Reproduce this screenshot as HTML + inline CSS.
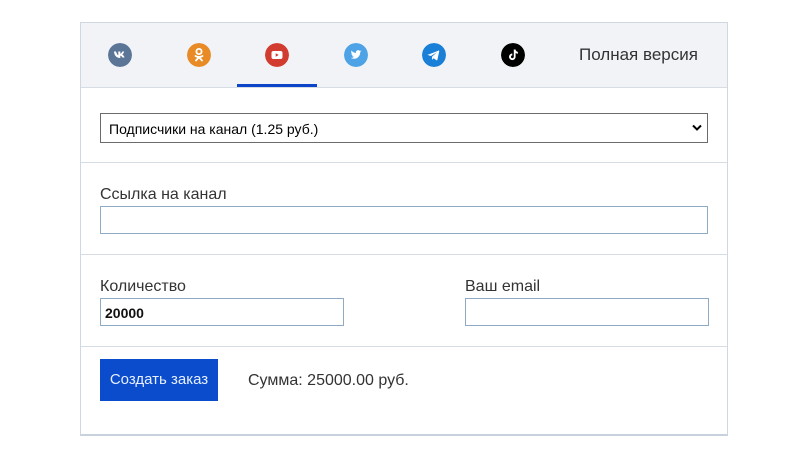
<!DOCTYPE html>
<html><head><meta charset="utf-8"><style>
*{box-sizing:border-box;margin:0;padding:0}
body{width:800px;height:456px;background:#fff;font-family:"Liberation Sans","DejaVu Sans",sans-serif;position:relative;overflow:hidden;color:#222}
.box{position:absolute;left:80px;top:22px;width:648px;height:414px;border:1px solid #cfd8e0;border-bottom:2px solid #c8d2dc}
.hdr{position:absolute;left:0;top:0;width:646px;height:65px;background:#f1f3f6;border-bottom:1px solid #d6dde4}
.ic{position:absolute;top:20px;width:24px;height:24px;border-radius:50%}
.ul{position:absolute;left:156px;top:61px;width:80px;height:3px;background:#0c45c7}
.full{position:absolute;left:498px;top:22px;font-size:17px;color:#333}
.hr{position:absolute;left:0;width:646px;height:1px;background:#d6dde4}
.sel{position:absolute;left:19px;top:90px;width:608px;height:30px;border:1px solid #6b6b6b;font-size:14px;padding:7px 8px;color:#000}
.lbl{position:absolute;font-size:16px;color:#333}
.inp{position:absolute;height:28px;border:1px solid #8eaac4;font-size:14px;font-weight:bold;padding:6px 4px;color:#111}
.btn{position:absolute;left:19px;top:336px;width:118px;height:42px;background:#0a4ccc;color:#e8f0ff;font-size:15px;text-align:center;line-height:42px}
</style></head><body>
<div class="box">
<div class="hdr">
<svg class="ic" style="left:27px" viewBox="0 0 24 24"><circle cx="12" cy="12" r="12" fill="#5b7597"/><path d="M6 8.5h2c.6 2 1.5 3.5 2.3 3.8V8.5h2v2.3c.8-.1 1.6-1.2 2-2.3h1.9c-.3 1.4-1.3 2.6-2 3 .8.4 1.9 1.4 2.3 3h-2.1c-.4-1-1.2-1.8-2.1-1.9V15h-.3C8.6 15 6.3 12.6 6 8.5z" fill="#fff"/></svg>
<svg class="ic" style="left:106px" viewBox="0 0 24 24"><circle cx="12" cy="12" r="12" fill="#e88b26"/><circle cx="12" cy="8.5" r="2.6" fill="none" stroke="#fff" stroke-width="1.8"/><path d="M8.5 13c2 1.3 5 1.3 7 0M12 14.2l-3 3.3M12 14.2l3 3.3" stroke="#fff" stroke-width="1.8" fill="none" stroke-linecap="round"/></svg>
<svg class="ic" style="left:184px" viewBox="0 0 24 24"><circle cx="12" cy="12" r="12" fill="#d23b2f"/><rect x="6.5" y="8" width="11" height="8" rx="2" fill="#fff"/><path d="M10.7 10.2v3.6l3-1.8z" fill="#d23b2f"/></svg>
<svg class="ic" style="left:263px" viewBox="0 0 24 24"><circle cx="12" cy="12" r="12" fill="#4ea2e6"/><path d="M17.5 8.3c-.4.2-.8.3-1.3.3.5-.3.8-.7 1-1.2-.4.3-.9.4-1.4.5a2.2 2.2 0 0 0-3.8 2C10.200 9.800 8.600 9 7.500 7.600c-.6 1-.3 2.300.7 2.900-.4 0-.7-.1-1-.3 0 1.100.8 2 1.800 2.200-.3.100-.7.100-1 0 .3.900 1.100 1.500 2.100 1.500A4.400 4.400 0 0 1 6.500 14.800c1 .6 2.100 1 3.400 1 4.100 0 6.300-3.400 6.300-6.300v-.3c.5-.3.9-.7 1.300-1.200z" fill="#fff"/></svg>
<svg class="ic" style="left:341px" viewBox="0 0 24 24"><circle cx="12" cy="12" r="12" fill="#1a7fd6"/><path d="M6 11.8l10.500-4.200c.5-.2.900.1.700.800l-1.800 8.400c-.1.600-.5.700-1 .4l-2.700-2-1.300 1.300c-.2.200-.4.200-.5-.1l.2-2.800 5-4.500-6.200 3.900-2.700-.9c-.6-.2-.6-.6.100-.8z" fill="#fff"/></svg>
<svg class="ic" style="left:420px" viewBox="0 0 24 24"><circle cx="12" cy="12" r="12" fill="#000"/><path d="M12.800 6.500h1.800c.1 1.400 1 2.300 2.300 2.400v1.800c-.9 0-1.700-.3-2.300-.7v3.800a3.300 3.300 0 1 1-3.300-3.300v1.900a1.400 1.400 0 1 0 1.500 1.400z" fill="#fff"/></svg>
<div class="ul"></div>
<div class="full">Полная версия</div>
</div>
<div class="sel">Подписчики на канал (1.25 руб.)<svg style="position:absolute;right:5px;top:10px" width="10" height="8" viewBox="0 0 10 8"><path d="M1 1.5l4 4 4-4" stroke="#000" stroke-width="2" fill="none"/></svg></div>
<div class="hr" style="top:139px"></div>
<div class="lbl" style="left:19px;top:163px">Ссылка на канал</div>
<div class="inp" style="left:19px;top:183px;width:608px"></div>
<div class="hr" style="top:231px"></div>
<div class="lbl" style="left:19px;top:255px">Количество</div>
<div class="inp" style="left:19px;top:275px;width:244px">20000</div>
<div class="lbl" style="left:384px;top:255px">Ваш email</div>
<div class="inp" style="left:384px;top:275px;width:244px"></div>
<div class="hr" style="top:323px"></div>
<div class="btn">Создать заказ</div>
<div class="lbl" style="left:167px;top:349px">Сумма: 25000.00 руб.</div>
</div>
</body></html>
